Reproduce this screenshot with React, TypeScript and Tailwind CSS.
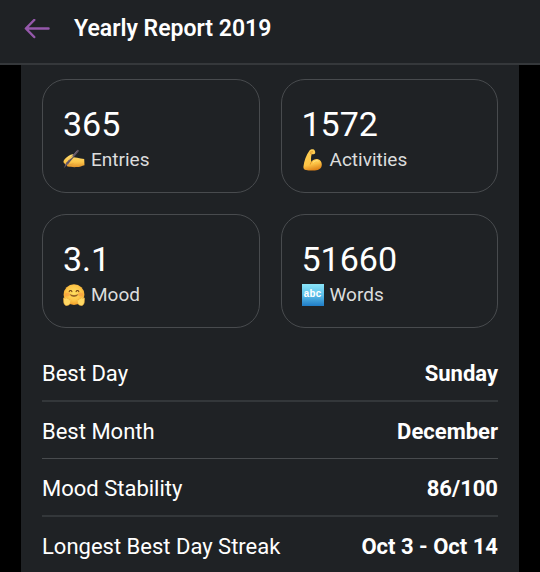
import React from "react";

interface Stat {
  value: string;
  label: string;
  icon: React.ReactNode;
}

interface Highlight {
  label: string;
  value: string;
}

const BackArrow = () => (
  <svg width="26" height="20" viewBox="0 0 26 20" fill="none" aria-hidden="true">
    <path
      d="M10.2 1 1.9 9.500l8.300 8.500M2 9.500h22.500"
      stroke="#9558ab"
      strokeWidth="2.500"
      strokeLinecap="round"
      strokeLinejoin="round"
    />
  </svg>
);

const WritingHand = () => (
  <svg width="22" height="22" viewBox="0 0 22 22" aria-hidden="true">
    <defs>
      <linearGradient id="hand" x1="0" y1="0" x2="0" y2="1">
        <stop offset="0" stopColor="#ffdd70" />
        <stop offset="0.6" stopColor="#fcc64a" />
        <stop offset="1" stopColor="#e0922a" />
      </linearGradient>
    </defs>
    <path
      d="M.8 11.600C1.800 9.600 4.600 7.500 7.600 5.800c1.300-.7 2.900-.7 3.300.1.400.8-.5 1.500-1.700 2.300 1.900-.2 3.500.1 5 .6 2.300.6 4.500 1 7 1.200l.3 6.200c-2.600.6-4.700 1.900-7.800 1.900-3.900.1-7.500-.1-8.900-.6-1.100-.4-1.100-1-.6-1.500-1.400 0-2.300-.4-2.300-1.300C.8 14.400 0 13.200.8 11.600Z"
      fill="url(#hand)"
    />
    <path d="M5 15.400c2 .3 3.800.1 5.400-.7" stroke="#dc9733" strokeWidth=".6" fill="none" />
    <path d="M14.800 1.900 4.400 14.200" stroke="#5f5260" strokeWidth="2.100" strokeLinecap="round" />
    <path d="m13.700 2.200-8.600 10.200" stroke="#85758a" strokeWidth=".6" strokeLinecap="round" />
    <path d="m3.400 13.300 1.800 1.500-4.400 4.500Z" fill="#6a5b69" />
    <path d="M5.600 9.400c1.800-1.600 3.500-2.300 4.800-2.400-.7 1.300-2.300 2.500-4.300 3.700" fill="#fcca53" />
  </svg>
);

const FlexedArm = () => (
  <svg width="22" height="22" viewBox="0 0 22 22" aria-hidden="true">
    <defs>
      <linearGradient id="arm" x1="0.3" y1="0" x2="0.5" y2="1">
        <stop offset="0" stopColor="#ffd055" />
        <stop offset="0.7" stopColor="#fdc446" />
        <stop offset="1" stopColor="#de8218" />
      </linearGradient>
    </defs>
    <path
      d="M7.500 1.500C8.700.3 10.900-.1 12.100.8c1.100.9 1.500 3.200.7 4-.8.800-2.200.3-3.100.2-.7 2.500-1 5.200-.3 8 1.700-2.400 4.300-3.300 6.700-2.700 3 .8 4.200 3.900 3.500 7-.5 2-1.700 3.100-3.900 3.600-3.400.8-8.300.8-11.700.1-2.200-.4-2.800-1.500-2.500-3.700C2.200 12 4 6.300 7.500 1.500Z"
      fill="url(#arm)"
    />
    <path d="M9.600 12.800c-.7.700-1.200 1.500-1.400 2.500M9.800 5 8.500 4.600M8.200 3.200l2.400-.4" stroke="#d88620" strokeWidth=".7" strokeLinecap="round" fill="none" />
    <path d="M11.400 13.100c1.600-1.500 3.500-1.700 4.800-1.100" stroke="#ffe07c" strokeWidth="1.200" strokeLinecap="round" fill="none" />
  </svg>
);

const HuggingFace = () => (
  <svg width="22" height="22" viewBox="0 0 22 22" aria-hidden="true">
    <defs>
      <radialGradient id="face" cx="0.5" cy="0.42" r="0.6">
        <stop offset="0" stopColor="#ffdf60" />
        <stop offset="0.6" stopColor="#fdc548" />
        <stop offset="1" stopColor="#f19b25" />
      </radialGradient>
    </defs>
    <circle cx="11" cy="10.700" r="10.400" fill="url(#face)" />
    <ellipse cx="4.500" cy="10.500" rx="2.500" ry="1.900" fill="#f57f3c" opacity=".4" />
    <ellipse cx="17.500" cy="10.500" rx="2.500" ry="1.900" fill="#f57f3c" opacity=".4" />
    <path d="M6.200 7.600c.4-1.400 2.300-1.400 2.700 0M13.100 7.600c.4-1.400 2.300-1.400 2.700 0" stroke="#754315" strokeWidth="1.100" strokeLinecap="round" fill="none" />
    <path d="M7.300 10.600c2.200 1.200 5.200 1.200 7.400 0-.7 2.500-6.700 2.500-7.400 0Z" fill="#85501e" stroke="#85501e" strokeWidth=".5" strokeLinejoin="round" />
    <g fill="#ffd863" stroke="#e8a63a" strokeWidth=".5" strokeLinejoin="round">
      <path d="M.4 14.200c.6-.7 1.500-.2 1.900.7l-.2-1.500c.4-.8 1.400-.5 1.700.3l.4 1.100c.2-1 1.500-.9 1.700 0l.3 1.300c.7-.9 1.800-.3 1.600.7-.3 2.500-1.200 4.500-3.400 4.800-2.100.3-3.200-1-3.700-3.100Z" />
      <path d="M21.600 14.200c-.6-.7-1.500-.2-1.900.7l.2-1.500c-.4-.8-1.400-.5-1.700.3l-.4 1.100c-.2-1-1.500-.9-1.700 0l-.3 1.300c-.7-.9-1.800-.3-1.600.7.300 2.500 1.200 4.500 3.400 4.800 2.100.3 3.200-1 3.700-3.100Z" />
    </g>
  </svg>
);

const LatinLetters = () => (
  <span
    aria-hidden="true"
    className="flex h-[22px] w-[22px] items-center justify-center bg-linear-to-b from-[#8be6f9] via-[#5bbfe9] to-[#1f7cc6] font-['Liberation_Mono',monospace] text-[10px] leading-none font-bold text-white"
  >
    abc
  </span>
);

const stats: Stat[] = [
  { value: "365", label: "Entries", icon: <WritingHand /> },
  { value: "1572", label: "Activities", icon: <FlexedArm /> },
  { value: "3.1", label: "Mood", icon: <HuggingFace /> },
  { value: "51660", label: "Words", icon: <LatinLetters /> },
];

const highlights: Highlight[] = [
  { label: "Best Day", value: "Sunday" },
  { label: "Best Month", value: "December" },
  { label: "Mood Stability", value: "86/100" },
  { label: "Longest Best Day Streak", value: "Oct 3 - Oct 14" },
];

const StatCard = ({ value, label, icon }: Stat) => (
  <article className="rounded-3xl border border-[#484b4e] px-5 pt-6 pb-4">
    <div className="text-[34px] leading-10 text-white">{value}</div>
    <div className="flex h-8 items-center gap-[6px] text-[19px] text-[#dcdddd]">
      {icon}
      {label}
    </div>
  </article>
);

const App = () => {
  return (
    <div className="min-h-screen bg-black font-[Roboto,sans-serif] text-white">
      <header className="flex h-[65px] items-center gap-6 border-b-2 border-[#35383b] bg-[#1f2225] px-6 pb-[5px]">
        <button type="button" aria-label="Back" className="cursor-pointer">
          <BackArrow />
        </button>
        <h1 className="text-[23px] leading-7 font-semibold">Yearly Report 2019</h1>
      </header>
      <main className="mx-[21px] min-h-[calc(100vh-65px)] bg-[#1f2225] px-[21px] pt-[14px]">
        <section className="grid grid-cols-2 gap-[21px]">
          {stats.map((stat) => (
            <StatCard key={stat.label} {...stat} />
          ))}
        </section>
        <dl className="pt-4">
          {highlights.map((item) => (
            <div
              key={item.label}
              className="flex items-center justify-between pt-4 pb-3 text-[22px] leading-7 odd:border-b-2 odd:border-[#33373a] even:border-b even:border-[#484b4e] last:border-b-0"
            >
              <dt>{item.label}</dt>
              <dd className="font-bold">{item.value}</dd>
            </div>
          ))}
        </dl>
      </main>
    </div>
  );
};

export default App;
